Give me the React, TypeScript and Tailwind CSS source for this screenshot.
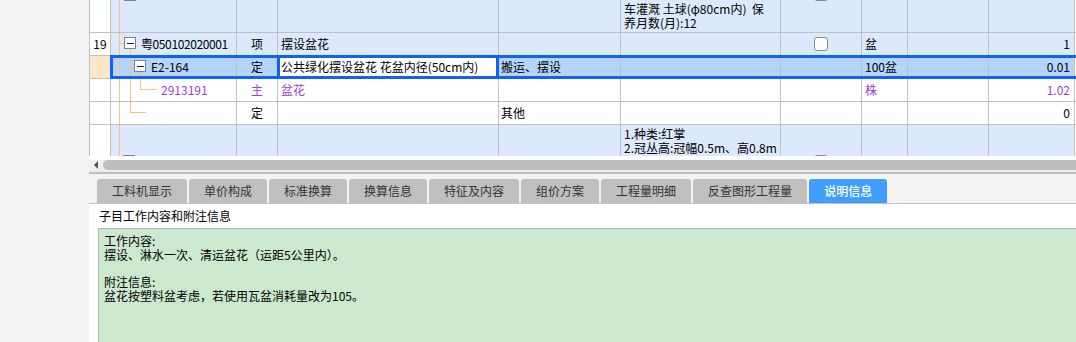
import React from "react";

const cell = "h-full shrink-0 border-r border-[#c0c0c0] relative flex items-center";
const blue = "bg-[#dce9fc]";
const sel = "bg-[#b5d4fb]";
const purple = "text-[#a33fc7]";

const W = {
    num: "w-[22px] border-l justify-center",
    code: "w-[126px]",
    type: "w-[41px] justify-center",
    name: "w-[221px] pl-[3px]",
    content: "w-[122px] pl-[2px]",
    feat: "w-[160px] pl-[3px]",
    check: "w-[81px] justify-center",
    unit: "w-[46px] pl-[3px]",
    c9: "w-[81px]",
    c10: "w-[86px] justify-end pr-[4px]",
};

const VLine = ({ className }: { className: string }) => (
    <div className={`absolute w-px bg-[#f9c27c] ${className}`} />
);

const HLine = ({ className }: { className: string }) => (
    <div className={`absolute h-px bg-[#f9c27c] ${className}`} />
);

const MinusBox = ({ className }: { className: string }) => (
    <div className={`absolute w-[12px] h-[12px] border border-[#838383] bg-white flex items-center justify-center ${className}`}>
        <div className="w-[7px] h-px bg-[#222]" />
    </div>
);

const CheckBox = ({ className = "" }: { className?: string }) => (
    <div className={`w-[14px] h-[14px] rounded-[3px] border border-[#8c8c8c] bg-white ${className}`} />
);

const tabs = ["工料机显示", "单价构成", "标准换算", "换算信息", "特征及内容", "组价方案", "工程量明细", "反查图形工程量", "说明信息"];

const App = () => {
    return (
        <div className="w-[1076px] h-[342px] overflow-hidden flex bg-[#f3f3f3] text-[12px] text-black [font-family:'Noto_Sans_CJK_SC','Liberation_Sans',sans-serif]">
            <div className="w-[89px] shrink-0" />

            <div className="flex-1 flex flex-col min-w-0">

                {/* grid */}
                <div className="h-[156px] shrink-0 overflow-hidden bg-white">

                    {/* partial row on top */}
                    <div className="flex h-[33px] border-b border-[#c0c0c0]">
                        <div className={`${cell} ${W.num} bg-white`} />
                        <div className={`${cell} ${W.code} ${blue}`}>
                            <VLine className="left-[8px] top-0 bottom-0" />
                            <MinusBox className="left-[13px] top-[-11px]" />
                        </div>
                        <div className={`${cell} ${W.type} ${blue}`} />
                        <div className={`${cell} ${W.name} ${blue}`} />
                        <div className={`${cell} ${W.content} ${blue}`} />
                        <div className={`${cell} ${W.feat} ${blue} !items-start pt-[2px] leading-[14px]`}>
                            <div>
                                <div className="whitespace-nowrap">车灌溉 土球(φ80cm内)&nbsp;&nbsp;保</div>
                                <div>养月数(月):12</div>
                            </div>
                        </div>
                        <div className={`${cell} ${W.check} ${blue}`}>
                            <CheckBox className="absolute top-[-13px] left-[33px]" />
                        </div>
                        <div className={`${cell} ${W.unit} ${blue}`} />
                        <div className={`${cell} ${W.c9} ${blue}`} />
                        <div className={`${cell} ${W.c10} ${blue}`} />
                    </div>

                    {/* 19 */}
                    <div className="flex h-[23px] border-b border-[#c0c0c0]">
                        <div className={`${cell} ${W.num} bg-white`}>19</div>
                        <div className={`${cell} ${W.code} ${blue} pl-[30px]`}>
                            <VLine className="left-[8px] top-0 bottom-0" />
                            <HLine className="left-[8px] w-[5px] top-[10px]" />
                            <MinusBox className="left-[13px] top-[4px]" />
                            <VLine className="left-[19px] top-[16px] bottom-0" />
                            <span className="tracking-[-0.4px]">粤050102020001</span>
                        </div>
                        <div className={`${cell} ${W.type} ${blue}`}>项</div>
                        <div className={`${cell} ${W.name} ${blue}`}>摆设盆花</div>
                        <div className={`${cell} ${W.content} ${blue}`} />
                        <div className={`${cell} ${W.feat} ${blue}`} />
                        <div className={`${cell} ${W.check} ${blue}`}>
                            <CheckBox />
                        </div>
                        <div className={`${cell} ${W.unit} ${blue}`}>盆</div>
                        <div className={`${cell} ${W.c9} ${blue}`} />
                        <div className={`${cell} ${W.c10} ${blue}`}>1</div>
                    </div>

                    {/* selected E2-164 */}
                    <div className="flex h-[23px] border-b border-[#c0c0c0] relative">
                        <div className={`${cell} ${W.num} bg-[#fde6c8]`} />
                        <div className={`${cell} ${W.code} ${sel} pl-[40px]`}>
                            <VLine className="left-[8px] top-0 bottom-0" />
                            <VLine className="left-[19px] top-0 bottom-0" />
                            <HLine className="left-[19px] w-[4px] top-[10px]" />
                            <MinusBox className="left-[23px] top-[4px]" />
                            <VLine className="left-[29px] top-[16px] bottom-0" />
                            <span>E2-164</span>
                        </div>
                        <div className={`${cell} ${W.type} ${sel}`}>定</div>
                        <div className={`${cell} ${W.name} bg-white`}>公共绿化摆设盆花 花盆内径(50cm内)</div>
                        <div className={`${cell} ${W.content} ${sel}`}>搬运、摆设</div>
                        <div className={`${cell} ${W.feat} ${sel}`} />
                        <div className={`${cell} ${W.check} ${sel}`} />
                        <div className={`${cell} ${W.unit} ${sel}`}>100盆</div>
                        <div className={`${cell} ${W.c9} ${sel}`} />
                        <div className={`${cell} ${W.c10} ${sel}`}>0.01</div>

                        <div className="absolute left-[21px] right-[-4px] top-[-1px] h-[24px] border-[3px] border-[#0d63f3] pointer-events-none" />
                        <div className="absolute left-[188px] w-[222px] top-[-1px] h-[24px] border-[3px] border-[#0d63f3] pointer-events-none" />
                    </div>

                    {/* 2913191 */}
                    <div className="flex h-[23px] border-b border-[#c0c0c0]">
                        <div className={`${cell} ${W.num} bg-white`} />
                        <div className={`${cell} ${W.code} bg-white pl-[50px] ${purple}`}>
                            <VLine className="left-[8px] top-0 bottom-0" />
                            <VLine className="left-[19px] top-0 bottom-0" />
                            <VLine className="left-[29px] top-0 h-[10px]" />
                            <HLine className="left-[29px] w-[16px] top-[10px]" />
                            <span>2913191</span>
                        </div>
                        <div className={`${cell} ${W.type} bg-white ${purple}`}>主</div>
                        <div className={`${cell} ${W.name} bg-white ${purple}`}>盆花</div>
                        <div className={`${cell} ${W.content} bg-white`} />
                        <div className={`${cell} ${W.feat} bg-white`} />
                        <div className={`${cell} ${W.check} bg-white`} />
                        <div className={`${cell} ${W.unit} bg-white ${purple}`}>株</div>
                        <div className={`${cell} ${W.c9} bg-white`} />
                        <div className={`${cell} ${W.c10} bg-white ${purple}`}>1.02</div>
                    </div>

                    {/* 定 其他 */}
                    <div className="flex h-[23px] border-b border-[#c0c0c0]">
                        <div className={`${cell} ${W.num} bg-white`} />
                        <div className={`${cell} ${W.code} bg-white`}>
                            <VLine className="left-[8px] top-0 bottom-0" />
                            <VLine className="left-[19px] top-0 h-[10px]" />
                            <HLine className="left-[19px] w-[16px] top-[10px]" />
                        </div>
                        <div className={`${cell} ${W.type} bg-white`}>定</div>
                        <div className={`${cell} ${W.name} bg-white`} />
                        <div className={`${cell} ${W.content} bg-white`}>其他</div>
                        <div className={`${cell} ${W.feat} bg-white`} />
                        <div className={`${cell} ${W.check} bg-white`} />
                        <div className={`${cell} ${W.unit} bg-white`} />
                        <div className={`${cell} ${W.c9} bg-white`} />
                        <div className={`${cell} ${W.c10} bg-white`}>0</div>
                    </div>

                    {/* next item, cut off by the scroll area */}
                    <div className="flex h-[80px] border-b border-[#c0c0c0]">
                        <div className={`${cell} ${W.num} bg-white`} />
                        <div className={`${cell} ${W.code} ${blue} !items-start pt-[28px] pl-[30px]`}>
                            <VLine className="left-[8px] top-0 bottom-0" />
                            <MinusBox className="left-[12px] top-[30px]" />
                            <span>粤050102009001</span>
                        </div>
                        <div className={`${cell} ${W.type} ${blue} !items-start pt-[28px]`}>项</div>
                        <div className={`${cell} ${W.name} ${blue} !items-start pt-[28px]`}>栽植花卉</div>
                        <div className={`${cell} ${W.content} ${blue}`} />
                        <div className={`${cell} ${W.feat} ${blue} !items-start pt-[2px] leading-[14px]`}>
                            <div>
                                <div>1.种类:红掌</div>
                                <div className="whitespace-nowrap">2.冠丛高:冠幅0.5m、高0.8m</div>
                                <div className="whitespace-nowrap">3.养护期:保养月数(月):12</div>
                            </div>
                        </div>
                        <div className={`${cell} ${W.check} ${blue} !items-start pt-[30px]`}>
                            <CheckBox />
                        </div>
                        <div className={`${cell} ${W.unit} ${blue} !items-start pt-[28px]`}>株</div>
                        <div className={`${cell} ${W.c9} ${blue}`} />
                        <div className={`${cell} ${W.c10} ${blue}`} />
                    </div>
                </div>

                {/* horizontal scrollbar */}
                <div className="h-[4px] shrink-0 bg-white" />
                <div className="h-[10px] shrink-0 flex items-center bg-[#f0f0f0]">
                    <div className="w-[14px] h-full flex items-center pl-[5px]">
                        <div className="w-0 h-0 border-y-[4px] border-y-transparent border-r-[4px] border-r-[#555]" />
                    </div>
                    <div className="flex-1 h-full rounded-l-full bg-[#bebebe]" />
                </div>
                <div className="h-[2px] shrink-0 bg-[#ececec]" />
                <div className="h-[2px] shrink-0 bg-[#bdbdbd]" />

                {/* tabs */}
                <div className="h-[30px] shrink-0 flex items-end gap-[2px] pl-[8px] border-b border-[#c0c0c0] bg-[#f3f3f3]">
                    {tabs.map((t) => (
                        <div
                            key={t}
                            className={`h-[24px] px-[15px] flex items-center rounded-t-[3px] text-[12px] whitespace-nowrap ${
                                t === "说明信息" ? "bg-[#409eff] text-white font-medium" : "bg-[#bfbfbf] text-[#333]"
                            }`}
                        >
                            {t}
                        </div>
                    ))}
                </div>

                {/* note panel */}
                <div className="flex-1 flex flex-col bg-white">
                    <div className="h-[24px] shrink-0 flex items-center pl-[10px]">子目工作内容和附注信息</div>
                    <div className="flex-1 ml-[9px] border-t border-l border-[#b4b4b4] bg-[#cce8cf] pl-[5px] pt-[5px] leading-[14px]">
                        <div>工作内容:</div>
                        <div>摆设、淋水一次、清运盆花（运距5公里内）。</div>
                        <div className="h-[13px]" />
                        <div>附注信息:</div>
                        <div>盆花按塑料盆考虑，若使用瓦盆消耗量改为105。</div>
                    </div>
                </div>

            </div>
        </div>
    );
};

export default App;
